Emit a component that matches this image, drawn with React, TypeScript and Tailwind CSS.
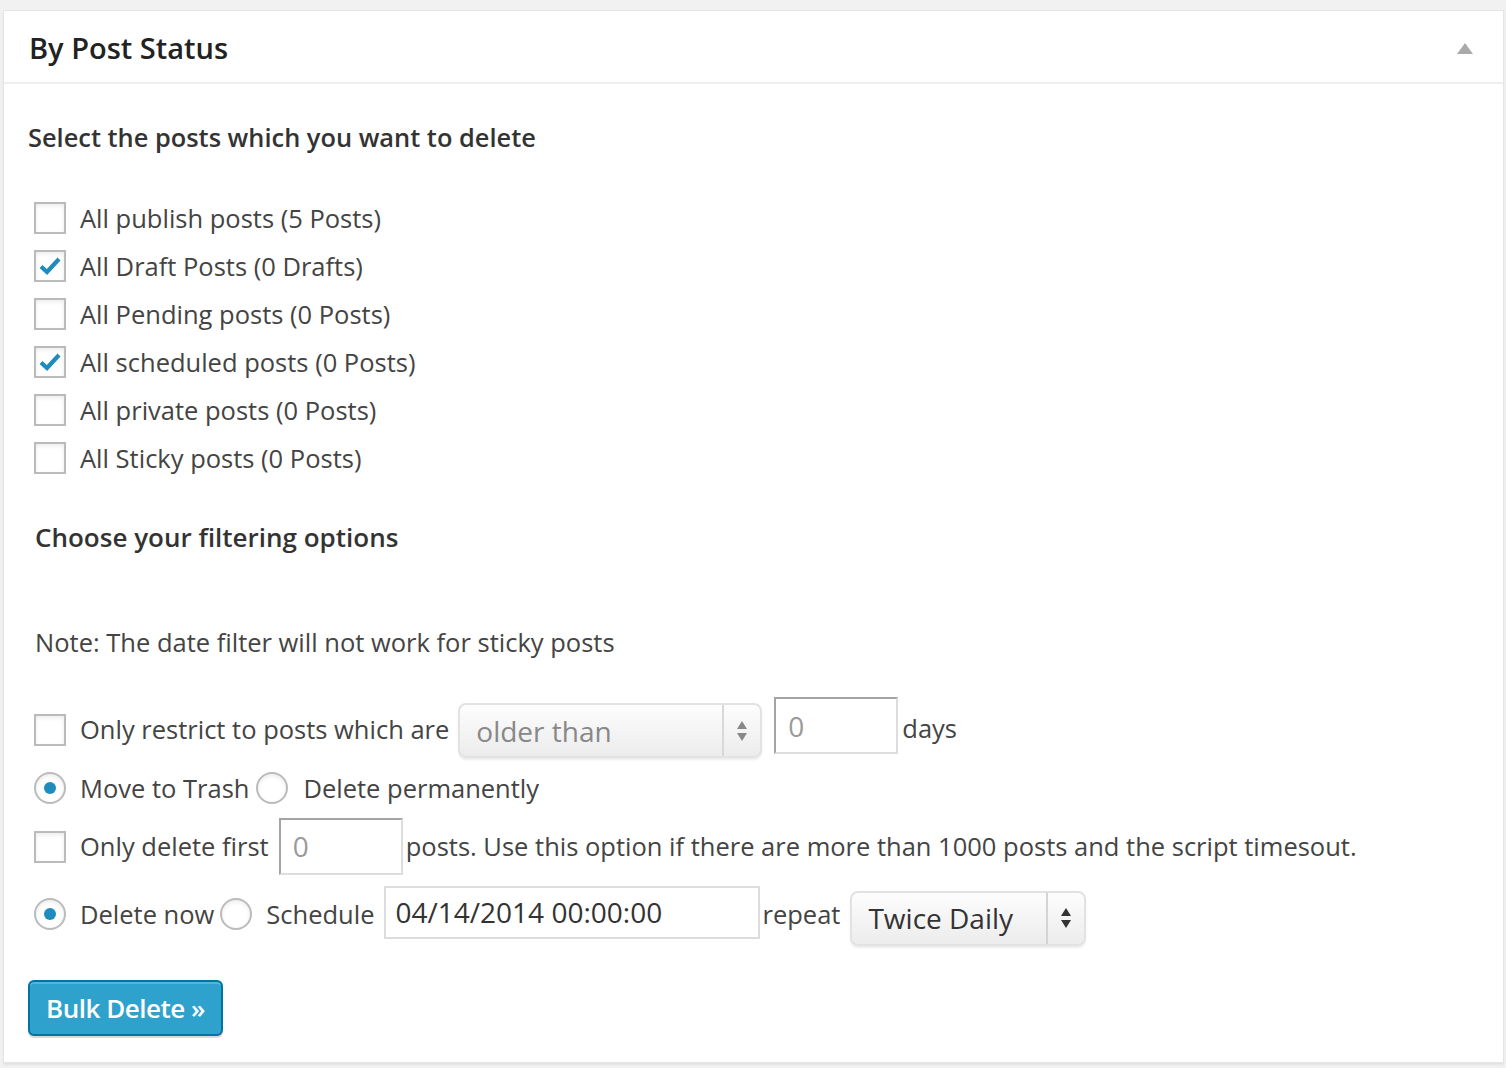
import React from 'react';

const Check = () => (
    <svg viewBox="0 0 32 32" className="w-[32px] h-[32px]">
        <path d="M7 16.5 L13 22 L25 9" fill="none" stroke="#1e8cbe" strokeWidth="4.2" strokeLinecap="butt" strokeLinejoin="miter" />
    </svg>
);

const Checkbox: React.FC<{ checked?: boolean; className?: string }> = ({ checked, className = '' }) => (
    <div className={`w-[32px] h-[32px] shrink-0 border-2 border-[#bbbbbb] bg-white shadow-[inset_0_2px_4px_rgba(0,0,0,0.08)] flex items-center justify-center ${className}`}>
        {checked && <div className="-m-[2px]"><Check /></div>}
    </div>
);

const Radio: React.FC<{ checked?: boolean; className?: string }> = ({ checked, className = '' }) => (
    <div className={`w-[32px] h-[32px] shrink-0 rounded-full border-2 border-[#bbbbbb] bg-white shadow-[inset_0_2px_4px_rgba(0,0,0,0.08)] flex items-center justify-center ${className}`}>
        {checked && <div className="w-[12px] h-[12px] rounded-full bg-[#1e8cbe]"></div>}
    </div>
);

const Arrows: React.FC<{ color: string }> = ({ color }) => (
    <svg viewBox="0 0 12 24" className="w-[12px] h-[24px]">
        <path d="M6 2 L11 10 L1 10 Z" fill={color} />
        <path d="M6 22 L11 14 L1 14 Z" fill={color} />
    </svg>
);

const FakeSelect: React.FC<{ label: string; width: string; divider: string; textColor: string; arrowColor: string }> = ({ label, width, divider, textColor, arrowColor }) => (
    <div className={`${width} h-[55px] shrink-0 rounded-[8px] border-2 border-[#e2e2e2] bg-gradient-to-b from-[#fdfdfd] to-[#ececec] shadow-[0_2px_2px_rgba(0,0,0,0.08)] flex items-center`}>
        <span className={`flex-1 pl-[16px] text-[28px] leading-none ${textColor}`}>{label}</span>
        <div className={`w-[2px] self-stretch ${divider}`}></div>
        <div className="w-[36px] flex items-center justify-center">
            <Arrows color={arrowColor} />
        </div>
    </div>
);

const InsetInput: React.FC<{ value: string }> = ({ value }) => (
    <div className="w-[124px] h-[57px] shrink-0 border-2 border-t-[#a4a4a4] border-l-[#a4a4a4] border-r-[#dddddd] border-b-[#dddddd] bg-white flex items-center pl-[12px] text-[28px] text-[#9a9a9a]">
        {value}
    </div>
);

const statuses = [
    { label: 'All publish posts (5 Posts)', checked: false },
    { label: 'All Draft Posts (0 Drafts)', checked: true },
    { label: 'All Pending posts (0 Posts)', checked: false },
    { label: 'All scheduled posts (0 Posts)', checked: true },
    { label: 'All private posts (0 Posts)', checked: false },
    { label: 'All Sticky posts (0 Posts)', checked: false },
];

export default function App() {
    return (
        <div className="min-h-[1068px] bg-[#f1f1f1] pt-[10px] pl-[3px] font-['Open_Sans',sans-serif] text-[#444444]">
            <div className="w-[1501px] h-[1053px] bg-white border border-[#e5e5e5] shadow-[0_2px_2px_rgba(0,0,0,0.06)]">

                {/* Header */}
                <div className="h-[73px] border-b-2 border-[#eeeeee] flex items-center justify-between pl-[25px] pr-[30px] pt-[2px]">
                    <h3 className="text-[29px] font-semibold text-[#222222] leading-none">By Post Status</h3>
                    <svg viewBox="0 0 16 11" className="w-[16px] h-[11px] mt-[2px]">
                        <path d="M8 0 L16 11 L0 11 Z" fill="#aaaaaa" />
                    </svg>
                </div>

                <div className="pl-[24px]">
                    <h4 className="mt-[35px] h-[36px] flex items-center text-[25.4px] font-semibold text-[#333333]">Select the posts which you want to delete</h4>

                    <div className="mt-[39px] pl-[6px]">
                        {statuses.map(s => (
                            <div key={s.label} className="h-[48px] flex items-center gap-[14px] text-[25.5px]">
                                <Checkbox checked={s.checked} />
                                <span>{s.label}</span>
                            </div>
                        ))}
                    </div>

                    <h4 className="mt-[37px] pl-[7px] h-[36px] flex items-center text-[26px] font-semibold text-[#333333]">Choose your filtering options</h4>

                    <p className="mt-[69px] pl-[7px] h-[36px] flex items-center text-[25.5px]">Note: The date filter will not work for sticky posts</p>

                    <div className="mt-[37px] pl-[6px] text-[25.5px]">
                        {/* date restriction */}
                        <div className="h-[62px] flex items-center">
                            <Checkbox className="mt-[4px]" />
                            <span className="ml-[14px] mt-[2px]">Only restrict to posts which are</span>
                            <div className="ml-[9px] mt-[5px]">
                                <FakeSelect label="older than" width="w-[304px]" divider="bg-[#d8d8d8]" textColor="text-[#888888]" arrowColor="#888888" />
                            </div>
                            <div className="ml-[12px] -mt-[5px]">
                                <InsetInput value="0" />
                            </div>
                            <span className="ml-[4px]">days</span>
                        </div>

                        {/* trash or delete */}
                        <div className="h-[58px] flex items-center">
                            <Radio checked />
                            <span className="ml-[14px]">Move to Trash</span>
                            <Radio className="ml-[7px]" />
                            <span className="ml-[15px]">Delete permanently</span>
                        </div>

                        {/* limit */}
                        <div className="h-[58px] flex items-center">
                            <Checkbox className="mt-[2px]" />
                            <span className="ml-[14px]">Only delete first</span>
                            <div className="ml-[10px]">
                                <InsetInput value="0" />
                            </div>
                            <span className="ml-[3px]">posts. Use this option if there are more than 1000 posts and the script timesout.</span>
                        </div>

                        {/* schedule */}
                        <div className="mt-[8px] h-[62px] flex items-center">
                            <Radio checked />
                            <span className="ml-[14px]">Delete now</span>
                            <Radio className="ml-[6px]" />
                            <span className="ml-[14px]">Schedule</span>
                            <div className="ml-[9px] -mt-[4px] w-[376px] h-[53px] border-2 border-[#dddddd] bg-white flex items-center pl-[10px] text-[28px] text-[#333333]">
                                04/14/2014 00:00:00
                            </div>
                            <span className="ml-[3px]">repeat</span>
                            <div className="ml-[10px] mt-[8px]">
                                <FakeSelect label="Twice Daily" width="w-[236px]" divider="bg-[#d4d4d4]" textColor="text-[#333333]" arrowColor="#333333" />
                            </div>
                        </div>
                    </div>

                    <button className="mt-[35px] w-[195px] h-[56px] rounded-[6px] border-2 border-[#0074a2] bg-[#2ea2cc] shadow-[inset_0_2px_0_rgba(120,200,230,0.5),0_2px_0_rgba(0,0,0,0.15)] text-white text-[26px] font-semibold tracking-[-0.5px] flex items-center justify-center">
                        Bulk Delete »
                    </button>
                </div>
            </div>
        </div>
    );
}
